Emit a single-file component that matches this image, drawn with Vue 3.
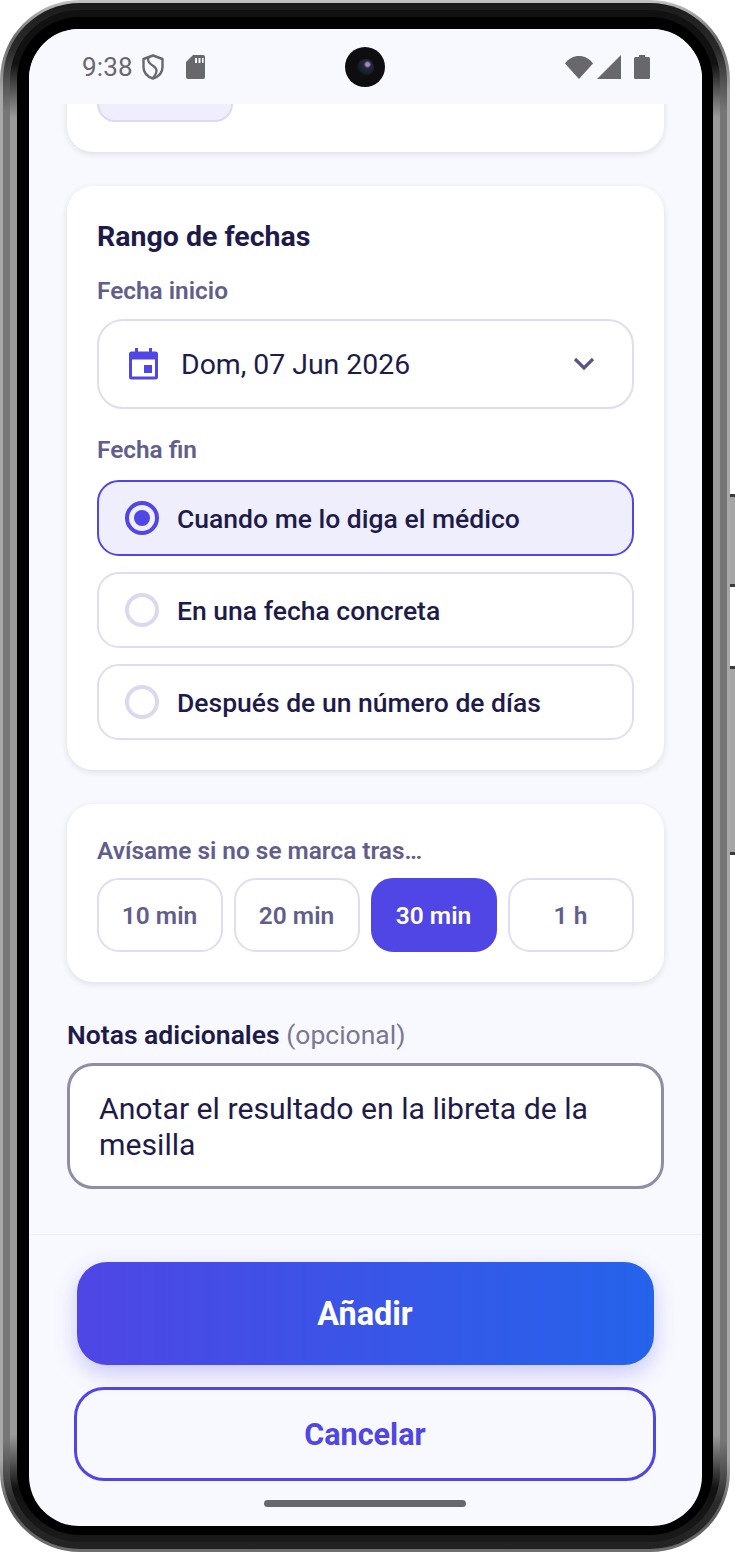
<script setup>
const endOptions = [
  { label: 'Cuando me lo diga el médico', selected: true },
  { label: 'En una fecha concreta', selected: false },
  { label: 'Después de un número de días', selected: false },
]
const times = [
  { label: '10 min', selected: false },
  { label: '20 min', selected: false },
  { label: '30 min', selected: true },
  { label: '1 h', selected: false },
]
</script>

<template>
  <div class="page">
    <div class="side-buttons">
      <span class="side-btn power"></span>
      <span class="side-btn volume"></span>
    </div>
    <div class="phone">
      <div class="ring-mid">
        <div class="ring-inner">
          <div class="bezel">
            <div class="screen">
              <header class="statusbar">
                <div class="status-left">
                  <span class="clock">9:38</span>
                  <svg class="shield" viewBox="0 0 22 26" width="22" height="26">
                    <path d="M11 1.500 20.500 5v8c0 5.500-4 9.700-9.500 11.500C5.500 22.700 1.500 18.500 1.500 13V5L11 1.500Z" fill="none" stroke="#68686c" stroke-width="2.400" stroke-linejoin="round"/>
                    <path d="M6.500 3C5 8 8 10 12 12.500C15.500 14.800 15.500 18.500 11 24" fill="none" stroke="#68686c" stroke-width="2.200"/>
                  </svg>
                  <svg class="sd" viewBox="0 0 19 24" width="19" height="24">
                    <path d="M7 0h10a2 2 0 0 1 2 2v20a2 2 0 0 1-2 2H2a2 2 0 0 1-2-2V7L7 0Z" fill="#68686c"/>
                    <path d="M9 3h2v5H9zM12.500 3h2v5h-2zM16 3h1.600v5H16z" fill="#f8f9fe"/>
                  </svg>
                </div>
                <div class="camera">
                  <span class="lens"></span>
                </div>
                <div class="status-right">
                  <svg viewBox="0 0 30 24" width="30" height="24">
                    <path d="M15 24 1 8.500C4.500 3.500 9.500 1 15 1s10.500 2.500 14 7.500L15 24Z" fill="#68686c"/>
                  </svg>
                  <svg viewBox="0 0 24 24" width="24" height="24">
                    <path d="M24 0v24H0L24 0Z" fill="#68686c"/>
                  </svg>
                  <svg class="battery" viewBox="0 0 16 24" width="16" height="24">
                    <path d="M5 0h6v2h3.500a1.500 1.500 0 0 1 1.500 1.500v19a1.500 1.500 0 0 1-1.500 1.500h-13A1.500 1.500 0 0 1 0 22.500v-19A1.500 1.500 0 0 1 1.500 2H5V0Z" fill="#68686c"/>
                  </svg>
                </div>
              </header>

              <main class="scroller">
                <section class="card card-clipped">
                  <div class="chip"></div>
                </section>

                <section class="card card-dates">
                  <h2 class="card-title">Rango de fechas</h2>
                  <div class="field-label first">Fecha inicio</div>
                  <div class="date-select">
                    <svg class="cal" viewBox="0 0 29 32" width="29" height="32">
                      <path fill-rule="evenodd" d="M6 0h3v3.500h11V0h3v3.500h3.500A2.500 2.500 0 0 1 29 6v23a2.500 2.500 0 0 1-2.500 2.500h-24A2.500 2.500 0 0 1 0 29V6a2.500 2.500 0 0 1 2.500-2.500H6V0ZM3 11.500V28.500h23v-17H3Z" fill="#4f46e5"/>
                      <rect x="15" y="17" width="8" height="8" fill="#4f46e5"/>
                    </svg>
                    <span class="date-text">Dom, 07 Jun 2026</span>
                    <svg class="chev" viewBox="0 0 22 14" width="22" height="14">
                      <path d="M2 2l9 9 9-9" fill="none" stroke="#5b5689" stroke-width="3.200"/>
                    </svg>
                  </div>
                  <div class="field-label second">Fecha fin</div>
                  <div class="options">
                    <div v-for="o in endOptions" :key="o.label" class="option" :class="{ on: o.selected }">
                      <span class="radio"><span v-if="o.selected" class="dot"></span></span>
                      <span class="option-text">{{ o.label }}</span>
                    </div>
                  </div>
                </section>

                <section class="card card-alert">
                  <div class="field-label alert-label">Avísame si no se marca tras…</div>
                  <div class="times">
                    <div v-for="t in times" :key="t.label" class="time" :class="{ on: t.selected }">{{ t.label }}</div>
                  </div>
                </section>

                <div class="notes-label"><strong>Notas adicionales</strong> <span>(opcional)</span></div>
                <div class="notes">Anotar el resultado en la libreta de la mesilla</div>
              </main>

              <footer class="footer">
                <button class="btn-primary">Añadir</button>
                <button class="btn-secondary">Cancelar</button>
                <div class="home"></div>
              </footer>
            </div>
          </div>
        </div>
      </div>
    </div>
  </div>
</template>

<style>
html, body { margin: 0; background: #fff; }
</style>

<style scoped>
.page {
  width: 735px;
  height: 1553px;
  position: relative;
  overflow: hidden;
  background: #fff;
  font-family: Roboto, "Liberation Sans", sans-serif;
}
.side-buttons { position: absolute; left: 726px; top: 0; width: 9px; }
.side-btn {
  position: absolute;
  left: 0;
  width: 9px;
  background: linear-gradient(#3a3a3a 0 3px, #a6a6a6 3px calc(100% - 3px), #3a3a3a calc(100% - 3px));
}
.power { top: 494px; height: 93px; }
.volume { top: 666px; height: 189px; }
.phone {
  position: relative;
  width: 730px;
  height: 1552px;
  box-sizing: border-box;
  border-radius: 80px;
  padding: 3px;
  background: linear-gradient(#c4c4c4, #6a6a6a 2.500%, #a8a8a8 6%, #a8a8a8 94%, #5a5a5a 97.500%, #707070);
}
.ring-mid {
  height: 100%;
  box-sizing: border-box;
  border-radius: 77px;
  padding: 7px;
  background: linear-gradient(#1c1c1c, #2a2a2a 3%, #767676 7%, #767676 93%, #2a2a2a 97%, #222);
}
.ring-inner {
  height: 100%;
  box-sizing: border-box;
  border-radius: 70px;
  padding: 7px;
  background: linear-gradient(#111, #111 3.500%, #9a9a9a 7%, #9a9a9a 93%, #111 96.500%, #1a1a1a);
}
.bezel {
  height: 100%;
  box-sizing: border-box;
  padding: 12px 11px 9px 12px;
  border-radius: 63px;
  background: #000;
}
.screen {
  height: 100%;
  border-radius: 50px;
  overflow: hidden;
  background: #f8f9fe;
  display: flex;
  flex-direction: column;
}
.statusbar {
  flex: none;
  height: 75px;
  display: flex;
  align-items: center;
  justify-content: space-between;
  padding: 0 52px 0 53px;
  position: relative;
  background: #f8f9fe;
  z-index: 2;
}
.status-left { display: flex; align-items: center; }
.clock { font-size: 26px; color: #68686c; letter-spacing: 0.2px; }
.shield { margin-left: 9px; }
.sd { margin-left: 22px; }
.status-right { display: flex; align-items: center; }
.status-right svg + svg { margin-left: 3px; }
.battery { margin-left: 13px !important; }
.camera {
  position: absolute;
  left: 316px;
  top: 18px;
  width: 40px;
  height: 40px;
  border-radius: 50%;
  background: #0e0e10;
  display: flex;
  align-items: center;
  justify-content: center;
}
.lens {
  width: 17px;
  height: 17px;
  border-radius: 50%;
  background: radial-gradient(circle at 62% 32%, #a08cc8 0 10%, #2a2438 24%, #14222a 55%, #05070a 85%);
}
.scroller {
  flex: none;
  height: 1130px;
  overflow: hidden;
  padding: 0 38px;
  display: flex;
  flex-direction: column;
}
.card {
  flex: none;
  box-sizing: border-box;
  background: #fff;
  border-radius: 26px;
  padding: 30px;
  box-shadow: 0 2px 6px rgba(30, 27, 75, .12);
}
.card-clipped {
  margin-top: -30px;
  height: 78px;
  padding: 0 30px;
}
.chip {
  width: 136px;
  height: 48px;
  box-sizing: border-box;
  background: #efeefd;
  border: 2px solid #dcd8f5;
  border-radius: 0 0 18px 18px;
  border-top: 0;
}
.card-dates { margin-top: 34px; height: 584px; padding-top: 32px; }
.card-title {
  margin: 0;
  font-size: 28.500px;
  line-height: 38px;
  font-weight: 700;
  color: #1e1b4b;
}
.field-label {
  font-size: 24.400px;
  line-height: 32px;
  font-weight: 600;
  color: #615e8c;
}
.field-label.first { margin-top: 19px; }
.date-select {
  margin-top: 12px;
  height: 90px;
  box-sizing: border-box;
  border: 2px solid #e0ddf3;
  border-radius: 26px;
  display: flex;
  align-items: center;
  padding: 0 37px 0 30px;
}
.date-text {
  margin-left: 23px;
  font-size: 28.400px;
  color: #1e1b4b;
  flex: 1;
}
.field-label.second { margin-top: 25px; }
.options {
  margin-top: 14px;
  display: flex;
  flex-direction: column;
  gap: 16px;
}
.option {
  height: 76px;
  box-sizing: border-box;
  border: 2px solid #e0ddf3;
  border-radius: 22px;
  display: flex;
  align-items: center;
  padding-left: 26px;
}
.option.on { background: #efeefd; border-color: #4f46e5; }
.radio {
  width: 34px;
  height: 34px;
  box-sizing: border-box;
  border: 4px solid #dcd8f0;
  border-radius: 50%;
  display: flex;
  align-items: center;
  justify-content: center;
  flex: none;
}
.option.on .radio { border-color: #4f46e5; }
.dot { width: 16px; height: 16px; border-radius: 50%; background: #4f46e5; }
.option-text {
  margin-left: 18px;
  font-size: 26.500px;
  font-weight: 500;
  color: #1e1b4b;
}
.card-alert { margin-top: 34px; height: 178px; padding-top: 31px; }
.times {
  margin-top: 11px;
  display: grid;
  grid-template-columns: repeat(4, 1fr);
  gap: 11px;
}
.time {
  height: 74px;
  box-sizing: border-box;
  border: 2px solid #e0ddf3;
  border-radius: 22px;
  display: flex;
  align-items: center;
  justify-content: center;
  padding-right: 1px;
  font-size: 24.500px;
  font-weight: 600;
  color: #615e8c;
}
.time.on { background: #4f46e5; border-color: #4f46e5; color: #fff; }
.notes-label {
  margin-top: 36px;
  font-size: 26.500px;
  line-height: 34px;
  color: #1e1b4b;
}
.notes-label strong { font-weight: 600; }
.notes-label span { color: #7a7894; }
.notes {
  margin-top: 11px;
  height: 126px;
  box-sizing: border-box;
  border: 3px solid #8f8da8;
  border-radius: 26px;
  background: #fff;
  padding: 25px 29px 0;
  font-size: 30.200px;
  line-height: 36px;
  color: #1e1b4b;
}
.footer {
  flex: 1;
  border-top: 1px solid #eeeef6;
  display: flex;
  flex-direction: column;
  align-items: center;
  position: relative;
}
.btn-primary {
  margin-top: 27px;
  margin-right: 1px;
  width: 577px;
  height: 103px;
  padding-top: 2px;
  border: 0;
  border-radius: 30px;
  background: linear-gradient(90deg, #4f46e5, #2563eb);
  box-shadow: 0 8px 22px rgba(79, 70, 229, .28);
  color: #fff;
  font: 700 32.400px Roboto, sans-serif;
}
.btn-secondary {
  margin-top: 22px;
  margin-right: 1px;
  width: 582px;
  height: 94px;
  padding-top: 2px;
  box-sizing: border-box;
  border: 3px solid #4f46e5;
  border-radius: 30px;
  background: transparent;
  color: #4f46e5;
  font: 700 30.500px Roboto, sans-serif;
}
.home {
  margin-top: 19px;
  margin-right: 1px;
  width: 202px;
  height: 7px;
  border-radius: 4px;
  background: #68686c;
}
</style>
